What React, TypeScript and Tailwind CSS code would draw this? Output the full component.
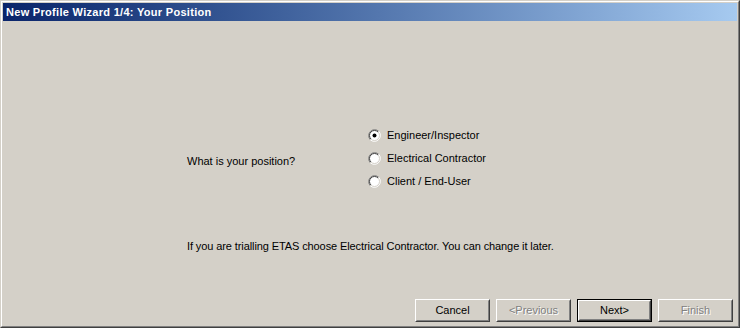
const font = { fontFamily: '"Liberation Sans", Arial, sans-serif' };

function Radio({ checked }: { checked?: boolean }) {
  return (
    <svg width="13" height="13" viewBox="0 0 13 13" className="shrink-0">
      <circle cx="6.5" cy="6.5" r="5.5" fill="#ffffff" />
      <path d="M2.26 10.74 A6 6 0 0 1 10.74 2.26" stroke="#808080" strokeWidth="1" fill="none" />
      <path d="M10.74 2.26 A6 6 0 0 1 2.26 10.74" stroke="#ffffff" strokeWidth="1" fill="none" />
      <path d="M2.96 10.04 A5 5 0 0 1 10.04 2.96" stroke="#404040" strokeWidth="1" fill="none" />
      <path d="M10.04 2.96 A5 5 0 0 1 2.96 10.04" stroke="#d4d0c8" strokeWidth="1" fill="none" />
      {checked && <circle cx="6.5" cy="6.5" r="2" fill="#000000" />}
    </svg>
  );
}

function Button({ label, disabled, isDefault }: { label: string; disabled?: boolean; isDefault?: boolean }) {
  const face = (
    <div className="border border-t-white border-l-white border-r-[#404040] border-b-[#404040] h-full">
      <div className="border border-t-[#d4d0c8] border-l-[#d4d0c8] border-r-[#808080] border-b-[#808080] h-full flex items-center justify-center">
        <span
          className={disabled ? 'text-[#808080] [text-shadow:1px_1px_0_#ffffff]' : 'text-black'}
        >
          {label}
        </span>
      </div>
    </div>
  );
  return (
    <div className={`w-[75px] h-[23px] bg-[#d4d0c8] ${isDefault ? 'border border-black' : ''}`}>
      {face}
    </div>
  );
}

export default function App() {
  const options = ['Engineer/Inspector', 'Electrical Contractor', 'Client / End-User'];

  return (
    <div className="w-[740px] h-[328px] text-[11px] leading-[13px] text-black" style={font}>
      <div className="h-full border border-t-[#d4d0c8] border-l-[#d4d0c8] border-r-[#404040] border-b-[#404040]">
        <div className="h-full border border-t-white border-l-white border-r-[#808080] border-b-[#808080] bg-[#d4d0c8] p-[1px] flex flex-col">
          <div className="h-[18px] shrink-0 flex items-center pl-[3px] bg-gradient-to-r from-[#0a246a] to-[#a6caf0] text-white font-bold tracking-[0.3px]">
            New Profile Wizard 1/4: Your Position
          </div>

          <div className="flex-1 flex flex-col pl-[184px] pr-[4px] pb-[3px]">
            <div className="flex mt-[103px]">
              <div className="w-[181px] mt-[31px]">What is your position?</div>
              <div className="flex flex-col">
                {options.map((o, i) => (
                  <div key={o} className="h-[23px] flex items-center gap-[6px]">
                    <Radio checked={i === 0} />
                    <span>{o}</span>
                  </div>
                ))}
              </div>
            </div>

            <div className="mt-[47px] tracking-[-0.1px]">
              If you are trialling ETAS choose Electrical Contractor. You can change it later.
            </div>

            <div className="flex-1" />

            <div className="flex justify-end gap-[6px]">
              <Button label="Cancel" />
              <Button label="<Previous" disabled />
              <Button label="Next>" isDefault />
              <Button label="Finish" disabled />
            </div>
          </div>
        </div>
      </div>
    </div>
  );
}
